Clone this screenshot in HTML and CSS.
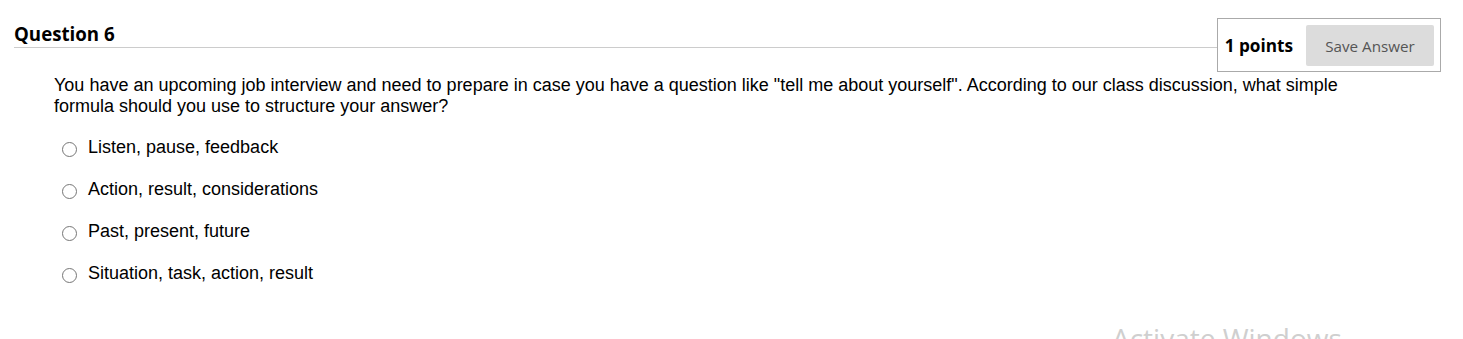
FILE: index.html
```html
<!DOCTYPE html>
<html>
<head>
<meta charset="utf-8">
<link rel="stylesheet" href="styles.css">
</head>
<body>
<div class="question">
  <div class="q-header">
    <h2 class="q-title">Question 6</h2>
    <div class="points-box">
      <span class="points">1 points</span>
      <button class="save-btn">Save Answer</button>
    </div>
  </div>
  <div class="q-body">
    <p class="q-text">You have an upcoming job interview and need to prepare in case you have a question like "tell me about yourself". According to our class discussion, what simple formula should you use to structure your answer?</p>
    <ul class="options">
      <li class="option"><span class="radio"></span><span>Listen, pause, feedback</span></li>
      <li class="option"><span class="radio"></span><span>Action, result, considerations</span></li>
      <li class="option"><span class="radio"></span><span>Past, present, future</span></li>
      <li class="option"><span class="radio"></span><span>Situation, task, action, result</span></li>
    </ul>
  </div>
</div>
<div class="watermark">Activate Windows</div>
</body>
</html>
```
FILE: styles.css
```css
html, body {
  margin: 0;
  padding: 0;
  background: #fff;
  overflow: hidden;
}
body {
  width: 1463px;
  height: 339px;
  position: relative;
  font-family: Arial, "Liberation Sans", sans-serif;
  color: #000;
}
.q-header {
  display: flex;
  align-items: flex-start;
  padding: 0 22px 0 14px;
}
.q-title {
  flex: 1;
  margin: 21px 0 0 0;
  font-family: "Open Sans", sans-serif;
  font-weight: 700;
  font-size: 18.7px;
  line-height: 26px;
  color: #000;
  border-bottom: 1px solid #cccccc;
}
.points-box {
  margin-top: 18px;
  border: 1px solid #aaaaaa;
  padding: 6px 6px 5px 7px;
  display: flex;
  align-items: center;
  gap: 13px;
  background: #fff;
}
.points {
  font-family: "Open Sans", sans-serif;
  font-weight: 700;
  font-size: 17.2px;
  color: #000;
}
.save-btn {
  width: 128px;
  height: 41px;
  border: none;
  border-radius: 2px;
  background: #dcdcdc;
  color: #555;
  font-family: "Open Sans", sans-serif;
  font-size: 15.2px;
  padding: 0;
}
.q-body {
  padding-left: 54px;
  margin-top: 3px;
}
.q-text {
  margin: 0;
  width: 1300px;
  font-size: 18px;
  line-height: 21px;
}
.options {
  list-style: none;
  margin: 20px 0 0 0;
  padding: 0;
  display: flex;
  flex-direction: column;
  gap: 21px;
}
.option {
  display: flex;
  align-items: center;
  font-size: 18px;
  line-height: 21px;
}
.radio {
  box-sizing: border-box;
  width: 15px;
  height: 15px;
  border: 1.5px solid #767676;
  border-radius: 50%;
  margin: 3px 11px 0 62px;
  margin-left: 8px;
  flex: none;
}
.watermark {
  position: absolute;
  left: 1112px;
  top: 319px;
  font-family: "Open Sans", sans-serif;
  font-size: 28px;
  color: #cfcfcf;
  white-space: nowrap;
}
```
